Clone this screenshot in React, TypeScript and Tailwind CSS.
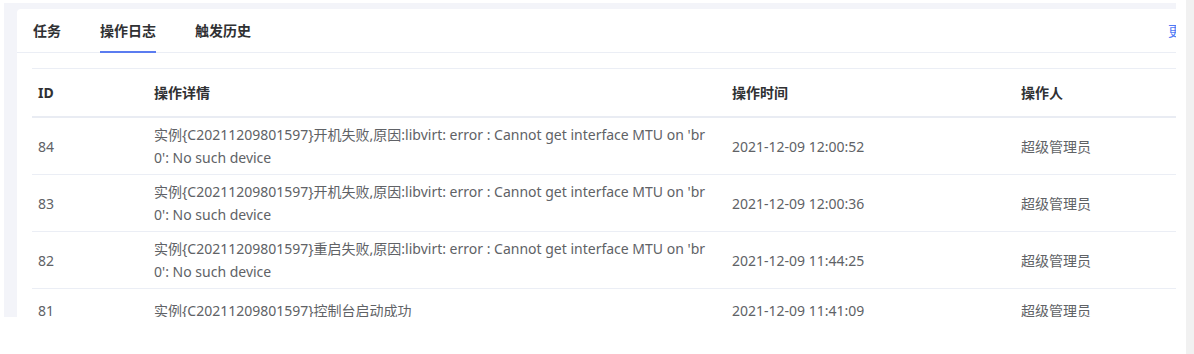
import React from "react";

interface LogRow {
  id: number;
  detail: string;
  time: string;
  operator: string;
}

const rows: LogRow[] = [
  {
    id: 84,
    detail:
      "实例{C20211209801597}开机失败,原因:libvirt: error : Cannot get interface MTU on 'br0': No such device",
    time: "2021-12-09 12:00:52",
    operator: "超级管理员",
  },
  {
    id: 83,
    detail:
      "实例{C20211209801597}开机失败,原因:libvirt: error : Cannot get interface MTU on 'br0': No such device",
    time: "2021-12-09 12:00:36",
    operator: "超级管理员",
  },
  {
    id: 82,
    detail:
      "实例{C20211209801597}重启失败,原因:libvirt: error : Cannot get interface MTU on 'br0': No such device",
    time: "2021-12-09 11:44:25",
    operator: "超级管理员",
  },
  {
    id: 81,
    detail: "实例{C20211209801597}控制台启动成功",
    time: "2021-12-09 11:41:09",
    operator: "超级管理员",
  },
];

const tabs = ["任务", "操作日志", "触发历史"];

export default function App() {
  const active = 1;

  return (
    <div
      className="flex h-[354px] w-[1194px] bg-white text-[14px]"
      style={{ fontFamily: '"Noto Sans", "Noto Sans CJK SC", sans-serif' }}
    >
      {/* MAIN */}
      <div className="min-w-0 flex-1 pl-[4px] pr-[10px] pt-[3px]">
        <div className="h-[314px] overflow-hidden bg-[#f3f4f9] pl-[13px] pt-[6px]">
          <div className="h-full w-[1195px] rounded-tl-[4px] bg-white">
            {/* TABS */}
            <div className="flex h-[44px] items-center justify-between border-b border-[#ebeef5] px-[16px]">
              <div className="flex h-full gap-[39px]">
                {tabs.map((tab, i) => (
                  <div
                    key={tab}
                    className="relative flex h-full items-center font-bold text-[#303133]"
                  >
                    {tab}
                    {i === active && (
                      <span className="absolute -bottom-[1px] left-0 right-0 h-[2px] bg-[#5b7cf0]" />
                    )}
                  </div>
                ))}
              </div>
              <span className="text-[#4f7af5]">更多</span>
            </div>

            {/* TABLE */}
            <div className="mx-[15px] mt-[15px] border-t border-[#ebeef5]">
              <div className="grid h-[49px] grid-cols-[116px_578px_289px_1fr] items-center border-b-2 border-[#e9ecf3] font-bold text-[#303133]">
                <div className="pl-[6px]">ID</div>
                <div className="pl-[6px]">操作详情</div>
                <div className="pl-[6px]">操作时间</div>
                <div className="pl-[6px]">操作人</div>
              </div>

              {rows.map((row) => (
                <div
                  key={row.id}
                  className="grid min-h-[44px] grid-cols-[116px_578px_289px_1fr] items-center border-b border-[#ebeef5] py-[5px] leading-[23px] text-[#606266]"
                >
                  <div className="pl-[6px]">{row.id}</div>
                  <div className="break-all pl-[6px] pr-[8px]">{row.detail}</div>
                  <div className="pl-[6px]">{row.time}</div>
                  <div className="pl-[6px]">{row.operator}</div>
                </div>
              ))}
            </div>
          </div>
        </div>
      </div>

      {/* SCROLLBAR */}
      <div className="w-[8px] shrink-0 bg-[#f1f1f1]" />
    </div>
  );
}
